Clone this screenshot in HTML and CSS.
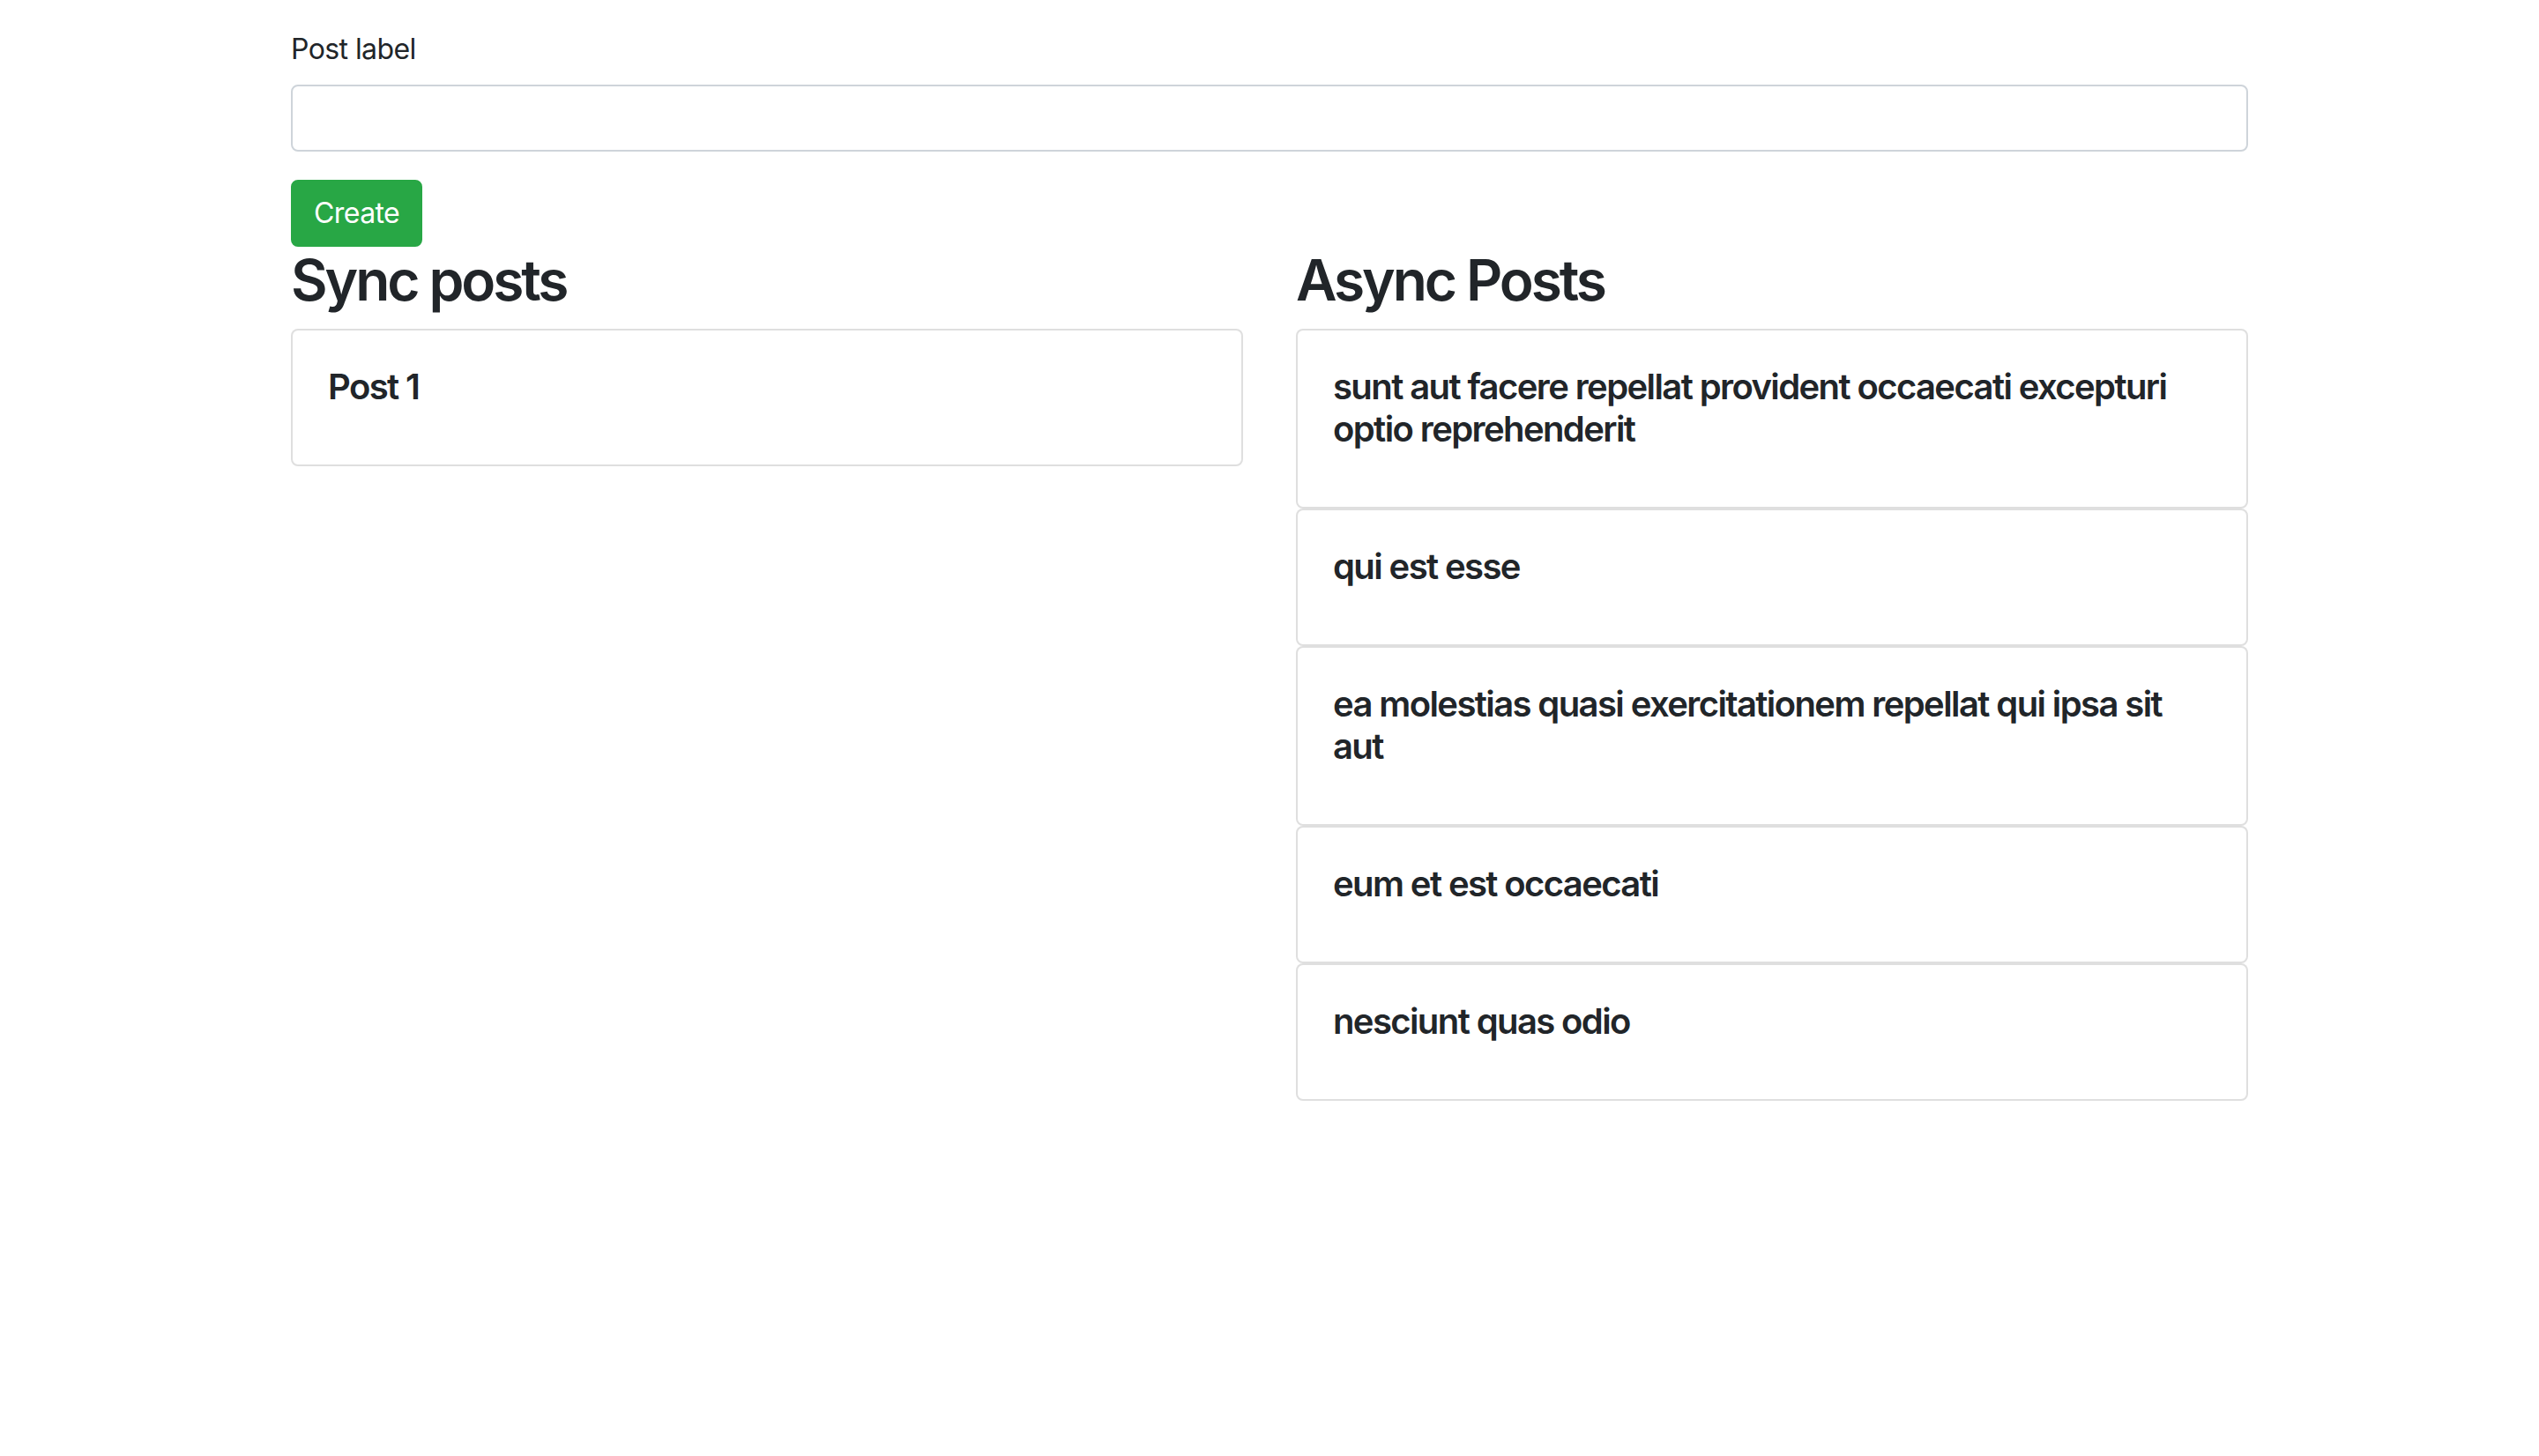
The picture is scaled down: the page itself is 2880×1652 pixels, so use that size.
FILE: index.html
```html
<!DOCTYPE html>
<html lang="en">
<head>
<meta charset="utf-8">
<title>Posts</title>
<link rel="stylesheet" href="styles.css">
</head>
<body>
<div class="container">
  <form class="post-form">
    <div class="form-group">
      <label class="form-label" for="post-label">Post label</label>
      <input class="form-control" id="post-label" type="text">
    </div>
    <button class="btn-create" type="button">Create</button>
  </form>
  <div class="row">
    <div class="col">
      <h2 class="section-title">Sync posts</h2>
      <div class="card"><div class="card-body"><h5 class="card-title">Post 1</h5></div></div>
    </div>
    <div class="col">
      <h2 class="section-title">Async Posts</h2>
      <div class="card"><div class="card-body"><h5 class="card-title">sunt aut facere repellat provident occaecati excepturi optio reprehenderit</h5></div></div>
      <div class="card"><div class="card-body"><h5 class="card-title">qui est esse</h5></div></div>
      <div class="card"><div class="card-body"><h5 class="card-title">ea molestias quasi exercitationem repellat qui ipsa sit aut</h5></div></div>
      <div class="card"><div class="card-body"><h5 class="card-title">eum et est occaecati</h5></div></div>
      <div class="card"><div class="card-body"><h5 class="card-title">nesciunt quas odio</h5></div></div>
    </div>
  </div>
</div>
</body>
</html>
```
FILE: styles.css
```css
* { box-sizing: border-box; }
html, body { margin: 0; background: #fff; }
body {
  font-family: Inter, "Liberation Sans", sans-serif;
  font-size: 32px;
  line-height: 1.5;
  letter-spacing: -0.018em;
  color: #212529;
}
.container {
  max-width: 2280px;
  margin: 32px auto 0;
  padding: 0 30px;
}
.post-form { margin: 0; }
.form-group { margin-bottom: 32px; }
.form-label {
  display: inline-block;
  margin-bottom: 16px;
}
.form-control {
  display: block;
  width: 100%;
  height: 76px;
  padding: 12px 24px;
  font: inherit;
  color: #495057;
  background: #fff;
  border: 2px solid #ced4da;
  border-radius: 8px;
  outline: none;
}
.btn-create {
  display: block;
  font-family: inherit;
  font-size: 32px;
  line-height: 48px;
  letter-spacing: -0.018em;
  padding: 12px 24px;
  color: #fff;
  background: #28a745;
  border: 2px solid #28a745;
  border-radius: 8px;
  margin: 0;
}
.row {
  display: flex;
  margin: 0 -30px;
}
.col {
  flex: 1 1 0;
  min-width: 0;
  padding: 0 30px;
}
.section-title {
  font-size: 64px;
  font-weight: 580;
  line-height: 1.2;
  letter-spacing: -0.048em;
  margin: 0 0 16px;
}
.card {
  border: 2px solid rgba(0, 0, 0, 0.125);
  border-radius: 8px;
  background: #fff;
}
.card-body { padding: 40px; }
.card-title {
  font-size: 40px;
  font-weight: 580;
  line-height: 1.2;
  letter-spacing: -0.04em;
  margin: 0 0 24px;
}
```
